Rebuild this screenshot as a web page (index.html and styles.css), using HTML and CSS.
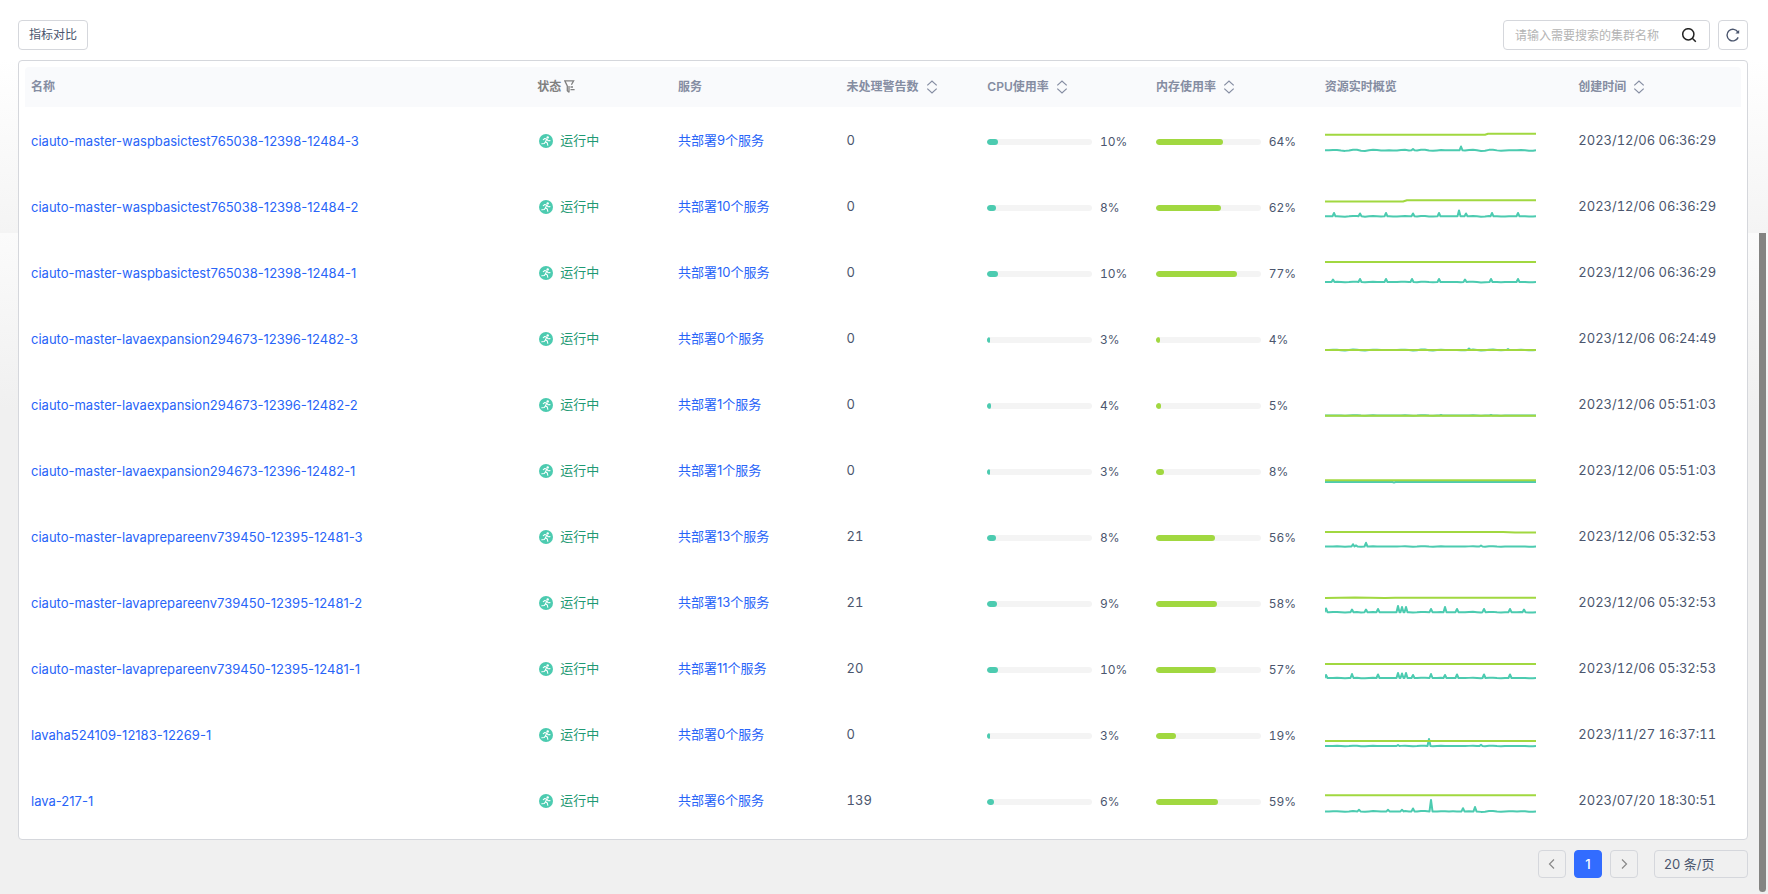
FILE: index.html
```html
<!DOCTYPE html>
<html lang="zh-CN">
<head>
  <meta charset="UTF-8" />
  <meta name="viewport" content="width=device-width, initial-scale=1" />
  <title>集群列表</title>
  <link rel="stylesheet" href="styles.css">
</head>
<body>

  <!-- Shared icons -->
  <svg class="sprite" aria-hidden="true">
    <symbol id="icon-sort" viewBox="0 0 12 14">
      <path d="M1.300 5.400L6 1l4.700 4.400M1.300 8.600L6 13l4.700-4.400" fill="none" stroke="currentColor" stroke-width="1.200" />
    </symbol>
    <symbol id="icon-run" viewBox="0 0 14 14">
      <circle cx="7" cy="7" r="7" fill="#4ccbb0" />
      <circle cx="8.700" cy="3.400" r="1.200" fill="#fff" />
      <path d="M4.300 5.600L5.800 4.500L8 5.300L9.200 6.800L11 6.600M7.800 5.300L6.400 7.700L8.300 9L8.800 11.300M6.300 8L5.300 9.500L2.800 9.700" fill="none" stroke="#fff" stroke-width="1.100" stroke-linecap="round" stroke-linejoin="round" />
    </symbol>
  </svg>

  <div class="toolbar">
    <button type="button" class="btn">指标对比</button>
    <form class="search" role="search">
      <input type="text" id="keyword" class="search-input" aria-label="搜索集群名称" placeholder="请输入需要搜索的集群名称" />
      <button type="button" class="search-btn" aria-label="搜索">
        <svg width="16" height="16" viewBox="0 0 16 16" fill="none" stroke="#222" stroke-width="1.500">
          <circle cx="7.300" cy="7.300" r="5.600" />
          <path d="M11.300 11.300L14.800 14.800" />
        </svg>
      </button>
    </form>
    <button type="button" class="btn btn-icon" aria-label="刷新">
      <svg width="14" height="14" viewBox="0 0 14 14" fill="none" stroke="#4b566e" stroke-width="1.400">
        <path d="M12.200 9.400A5.800 5.800 0 1 1 11.900 4.200" />
        <path d="M13.200 1.900V5.500H9.400z" fill="#4b566e" stroke="none" />
      </svg>
    </button>
  </div>

  <div class="card">
    <table class="clusters">
      <colgroup>
        <col class="col-name"><col class="col-s"><col class="col-m"><col class="col-s">
        <col class="col-m"><col class="col-m"><col class="col-chart"><col class="col-m">
      </colgroup>
      <thead>
        <tr>
          <th>名称</th>
          <th class="th-status">状态 <svg class="filter" width="11" height="13" viewBox="0 0 11 13" fill="none" stroke="currentColor" stroke-width="1.300"><path d="M5 12.400L3.300 10.800V6L.8.900H9.600L7.400 4.800M5 6V12.400M6.500 7H9M6.500 9.600H10.600" /></svg></th>
          <th>服务</th>
          <th>未处理警告数 <svg class="sort"><use href="#icon-sort" /></svg></th>
          <th>CPU使用率 <svg class="sort"><use href="#icon-sort" /></svg></th>
          <th>内存使用率 <svg class="sort"><use href="#icon-sort" /></svg></th>
          <th>资源实时概览</th>
          <th>创建时间 <svg class="sort"><use href="#icon-sort" /></svg></th>
        </tr>
      </thead>
      <tbody id="rows"></tbody>
    </table>
  </div>

  <div class="pagination">
    <button type="button" class="page" aria-label="上一页">
      <svg width="12" height="12" viewBox="0 0 12 12" fill="none" stroke="#888" stroke-width="1.200"><path d="M8 1.500L3.500 6L8 10.500" /></svg>
    </button>
    <button type="button" class="page active">1</button>
    <button type="button" class="page" aria-label="下一页">
      <svg width="12" height="12" viewBox="0 0 12 12" fill="none" stroke="#888" stroke-width="1.200"><path d="M4 1.500L8.500 6L4 10.500" /></svg>
    </button>
    <select class="page-size" aria-label="每页条数">
      <option>20 条/页</option>
    </select>
  </div>

  <div class="scroll-thumb"></div>

  <script src="script.js"></script>
</body>
</html>
```
FILE: styles.css
```css
* {
  box-sizing: border-box;
}
body {
  margin: 0;
  padding: 20px 20px 16px 18px;
  font-family: Inter, "Noto Sans CJK SC", sans-serif;
  font-size: 13px;
  line-height: 20px;
  color: #4b566e;
  background: #f0f0f0 linear-gradient(#fff 0, #fff 60px, #f4f4f4 233px, #fbfbfb 233px, #f0f0f0 410px) no-repeat;
}
button,
input,
select {
  font: inherit;
  font-size: 12px;
  color: inherit;
}
button {
  display: flex;
  align-items: center;
  justify-content: center;
  padding: 0;
  border: 0;
  background: none;
  cursor: pointer;
}
a {
  color: #2864f8;
  text-decoration: none;
}
.sprite {
  display: none;
}

/* Toolbar */
.toolbar {
  display: flex;
  gap: 8px;
  margin-bottom: 10px;
}
.btn {
  height: 30px;
  padding: 0 10px;
  border: 1px solid #d5d7dc;
  border-radius: 4px;
  background: #fff;
}
.btn-icon {
  width: 30px;
  padding: 0;
}
.search {
  display: flex;
  width: 207px;
  height: 30px;
  margin-left: auto;
  border: 1px solid #d5d7dc;
  border-radius: 4px;
  background: #fff;
}
.search-input {
  flex: 1;
  min-width: 0;
  padding: 1px 0 0 11px;
  border: 0;
  outline: 0;
  background: none;
}
.search-input::placeholder {
  color: #b4b4b4;
}
.search-btn {
  width: 40px;
}

/* Cluster table */
.card {
  padding: 6px;
  border: 1px solid #d5d7dc;
  border-radius: 4px;
  background: #fff;
}
.clusters {
  width: 100%;
  table-layout: fixed;
  border-collapse: collapse;
}
.col-name { width: 29.5%; }
.col-s { width: 8.2%; }
.col-m { width: 9.83%; }
.col-chart { width: 14.78%; }

th,
td {
  padding: 0 6px;
  text-align: left;
  white-space: nowrap;
}
th {
  height: 40px;
  font-size: 12px;
  font-weight: 600;
  color: #858da2;
  background: #f9fafc;
}
th:first-child {
  border-radius: 4px 0 0;
}
th:last-child {
  border-radius: 0 4px 0 0;
}
td {
  height: 66px;
}
.name {
  padding-top: 2px;
}
.num {
  font-variant-numeric: tabular-nums;
}
.th-status {
  color: #808080;
}
.filter {
  vertical-align: -2px;
}
.sort {
  width: 12px;
  height: 14px;
  margin-left: 4px;
  vertical-align: -3px;
}
.status {
  display: flex;
  align-items: center;
  gap: 7px;
  padding-left: 2px;
  color: #1f9a74;
}
.status svg {
  width: 14px;
  height: 14px;
  margin-top: 1px;
}
.usage {
  display: flex;
  align-items: center;
  gap: 8px;
  padding-top: 3px;
  font-size: 12px;
}
.bar {
  flex: 1;
  height: 6px;
  border-radius: 3px;
  background: #f4f4f4;
  overflow: hidden;
}
.bar div {
  height: 100%;
  border-radius: 3px;
}
.cpu div {
  background: #4ccbb0;
}
.mem div {
  background: #a1d840;
}
.usage span {
  width: 44px;
}
.spark {
  display: block;
  width: 211px;
  height: 30px;
  fill: none;
  stroke-width: 2;
  stroke-linejoin: round;
}
.spark .cpu-line {
  stroke: #4ccbb0;
}
.spark .mem-line {
  stroke: #a1d840;
}

/* Pagination */
.pagination {
  display: flex;
  justify-content: flex-end;
  gap: 8px;
  margin-top: 10px;
}
.page {
  width: 28px;
  height: 28px;
  border: 1px solid #d5d7dc;
  border-radius: 4px;
}
.page.active {
  border-color: #326cff;
  font-size: 13px;
  font-weight: 500;
  color: #fff;
  background: #326cff;
}
.page-size {
  width: 94px;
  height: 28px;
  margin-left: 8px;
  padding: 0 9px;
  border: 1px solid #d5d7dc;
  border-radius: 4px;
  font-size: 13px;
  background: none;
  appearance: none;
}

.scroll-thumb {
  position: fixed;
  top: 233px;
  right: 2px;
  bottom: 2px;
  width: 7px;
  border-radius: 0 0 4px 4px;
  background: #848482;
}
```
FILE: script.js
```js
// mem: points of the memory line
// base: resting height of the CPU line, peaks: [x, y] spikes on it
const clusters = [
  { name: 'ciauto-master-waspbasictest765038-12398-12484-3', services: 9, alerts: 0, cpu: 10, ram: 64, time: '2023/12/06 06:36:29',
    mem: '0,9.7 160,9.7 163,8.8 211,8.8', base: 25.3, noise: 0.7, peaks: [[88, 24], [136, 21.5]] },
  { name: 'ciauto-master-waspbasictest765038-12398-12484-2', services: 10, alerts: 0, cpu: 8, ram: 62, time: '2023/12/06 06:36:29',
    mem: '0,10.5 78,10.5 82,9.3 211,9.3', base: 25.3, noise: 0.4, peaks: [[9, 22], [35, 22.5], [61, 22], [88, 22.5], [114, 22], [134, 19.5], [141, 22.5], [167, 22], [193, 22]] },
  { name: 'ciauto-master-waspbasictest765038-12398-12484-1', services: 10, alerts: 0, cpu: 10, ram: 77, time: '2023/12/06 06:36:29',
    mem: '0,5 211,5', base: 25, noise: 0.4, peaks: [[8, 22.5], [35, 22], [61, 22], [87, 22], [114, 22], [140, 22.5], [166, 22], [193, 22]] },
  { name: 'ciauto-master-lavaexpansion294673-12396-12482-3', services: 0, alerts: 0, cpu: 3, ram: 4, time: '2023/12/06 06:24:49',
    mem: '0,27 211,27', base: 27, noise: 0.5, peaks: [[144, 25.5], [183, 26]] },
  { name: 'ciauto-master-lavaexpansion294673-12396-12482-2', services: 1, alerts: 0, cpu: 4, ram: 5, time: '2023/12/06 05:51:03',
    mem: '0,26.8 211,26.8', base: 26.5, noise: 0.2, peaks: [[116, 26], [166, 26]] },
  { name: 'ciauto-master-lavaexpansion294673-12396-12482-1', services: 1, alerts: 0, cpu: 3, ram: 8, time: '2023/12/06 05:51:03',
    mem: '0,25.3 211,25.3', base: 27, noise: 0.1, peaks: [[69, 27.6]] },
  { name: 'ciauto-master-lavaprepareenv739450-12395-12481-3', services: 13, alerts: 21, cpu: 8, ram: 56, time: '2023/12/06 05:32:53',
    mem: '0,11 178,11 190,11.4 211,11.4', base: 25.5, noise: 0.3, peaks: [[28, 23.2], [31, 24.4], [41, 21.8], [156, 24.5]] },
  { name: 'ciauto-master-lavaprepareenv739450-12395-12481-2', services: 13, alerts: 21, cpu: 9, ram: 58, time: '2023/12/06 05:32:53',
    mem: '0,11 30,10.6 60,11 70,10.7 211,10.8', base: 25.2, noise: 0.4, peaks: [[1, 21.5], [27, 22.5], [41, 22.5], [53, 22], [73, 19], [77, 20], [81, 20], [106, 22], [120, 20], [132, 22], [159, 22], [185, 22], [199, 22.5]] },
  { name: 'ciauto-master-lavaprepareenv739450-12395-12481-1', services: 11, alerts: 20, cpu: 10, ram: 57, time: '2023/12/06 05:32:53',
    mem: '0,11 211,11', base: 25, noise: 0.3, peaks: [[1, 22], [27, 21], [53, 21.5], [73, 20], [77, 20.5], [81, 20], [88, 22], [106, 21], [120, 22], [132, 21.5], [159, 21.5], [185, 21.5]] },
  { name: 'lavaha524109-12183-12269-1', services: 0, alerts: 0, cpu: 3, ram: 19, time: '2023/11/27 16:37:11',
    mem: '0,22 211,22', base: 27, noise: 0.3, peaks: [[73, 26], [104, 20], [156, 25.8]] },
  { name: 'lava-217-1', services: 6, alerts: 139, cpu: 6, ram: 59, time: '2023/07/20 18:30:51',
    mem: '0,10.2 211,10.2', base: 26.4, noise: 0.5, peaks: [[34, 24.8], [63, 24.8], [77, 24.8], [88, 23.5], [106, 15], [138, 23.2], [150, 22]] }
];

// CPU line: slight ripple round the base, with the spikes added
function cpuPoints(c) {
  const points = [];
  for (let x = 0; x <= 211; x += 4) {
    if (!c.peaks.some(p => Math.abs(p[0] - x) < 3)) {
      const ripple = (Math.sin(x * 0.37) + Math.sin(x * 1.3)) * 0.5 * c.noise;
      points.push([x, c.base + ripple]);
    }
  }
  c.peaks.forEach(p => {
    points.push([p[0] - 1.5, c.base], p, [p[0] + 1.5, c.base]);
  });
  points.push([211, c.base]);
  return points.sort((a, b) => a[0] - b[0]).map(p => p.join(',')).join(' ');
}

function usage(kind, value) {
  return `<div class="usage"><div class="bar ${kind}"><div style="width: ${value}%"></div></div><span>${value}%</span></div>`;
}

document.getElementById('rows').innerHTML = clusters.map(c => `
  <tr>
    <td class="name"><a href="#">${c.name}</a></td>
    <td><div class="status"><svg><use href="#icon-run" /></svg>运行中</div></td>
    <td><a href="#">共部署${c.services}个服务</a></td>
    <td class="num">${c.alerts}</td>
    <td class="num">${usage('cpu', c.cpu)}</td>
    <td class="num">${usage('mem', c.ram)}</td>
    <td><svg class="spark" viewBox="0 0 211 30">
      <polyline class="cpu-line" points="${cpuPoints(c)}" />
      <polyline class="mem-line" points="${c.mem}" />
    </svg></td>
    <td class="num">${c.time}</td>
  </tr>`).join('');
```
